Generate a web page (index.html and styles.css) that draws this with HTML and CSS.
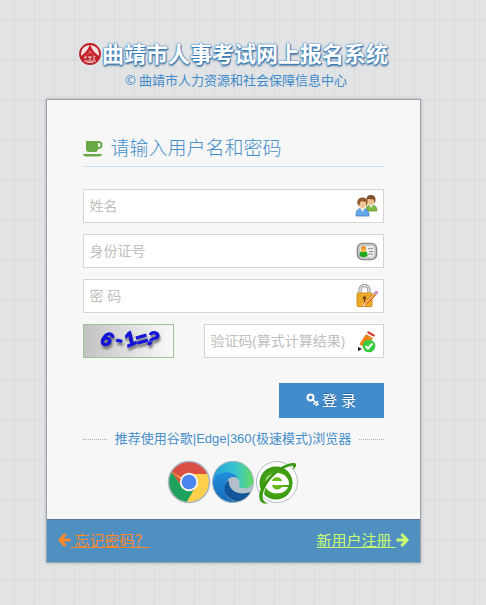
FILE: index.html
```html
<!DOCTYPE html>
<html lang="zh-CN">
<head>
  <meta charset="UTF-8">
  <meta name="viewport" content="width=device-width, initial-scale=1">
  <title>曲靖市人事考试网上报名系统</title>
  <link rel="stylesheet" href="styles.css">
</head>
<body>

  <div class="container">

    <header>
      <h1>
        <svg class="logo" viewBox="0 0 24 24" aria-hidden="true">
          <circle cx="12" cy="13" r="10" fill="#f3e3e3" stroke="#bf1f27" stroke-width="1.8"/>
          <path d="M12 2C11 8 7 12 3 15v2c4-1 7-4 9-7 2 3 5 6 9 7v-2C17 12 13 8 12 2z" fill="#c8232b"/>
          <path d="M12 11L4 18h16z" fill="#c8232b"/>
          <path d="M3 16h18l-2 5H5z" fill="#bf1f27"/>
          <path d="M7 16h2m1 0h4m1 0h2M7 18v-2m5 0v3m3-1h2" stroke="#f3e3e3"/>
          <path d="M6 20h12" stroke="#f3e3e3" stroke-width="1"/>
        </svg>
        <span>曲靖市人事考试网上报名系统</span>
      </h1>
      <p class="company">© 曲靖市人力资源和社会保障信息中心</p>
    </header>

    <main class="login-box">
      <form class="login-main">
        <h2>
          <svg class="coffee" viewBox="0 0 20 16" aria-hidden="true">
            <path fill="#69aa46" fill-rule="evenodd" d="M3 0h12.500a4 4 0 0 1 0 8H15a3 3 0 0 1-3 3H6a3 3 0 0 1-3-3zM15 2v4h.5a2 2 0 0 0 0-4zM0 13h19c0 1.500-1.500 2.500-3 2.500H3C1.500 15.500 0 14.500 0 13z"/>
          </svg>
          请输入用户名和密码
        </h2>

        <div class="field">
          <input type="text" placeholder="姓名" aria-label="姓名">
          <svg class="field-icon" viewBox="0 0 24 24" aria-hidden="true">
            <path d="M11 17c0-5 2-6 5-6s6 1 6 6z" fill="#7fb943" stroke="#60952f" stroke-width=".7"/>
            <path d="M14 11l2 3 2-3z" fill="#f6eee0"/>
            <circle cx="16" cy="6.500" r="4" fill="#eebd8b"/>
            <path d="M11.500 7C11 3 13 1 16 1s5 2 4.500 6l-1.500 2V5.500l-6-.5z" fill="#80502a"/>
            <path d="M1 22c0-6 2-7.500 6-7.500s7 1.500 7 7.500z" fill="#65a8ea" stroke="#3f80c4" stroke-width=".8"/>
            <path d="M5 14l2.500 4 2.500-4z" fill="#f6eee0"/>
            <circle cx="7.500" cy="9.500" r="4.500" fill="#f2c596"/>
            <path d="M2.500 10C1.500 6 4 3.500 7.500 3.500S13.500 6 12.500 10L11 12V8L6 7 4 12z" fill="#905a2e"/>
          </svg>
        </div>

        <div class="field">
          <input type="text" placeholder="身份证号" aria-label="身份证号">
          <svg class="field-icon" viewBox="0 0 24 24" aria-hidden="true">
            <rect x="2.500" y="4.500" width="19" height="16" rx="5" fill="#dcdcdc" stroke="#8b8b8b" stroke-width="1.600"/>
            <rect x="4.500" y="6.500" width="15" height="12" rx="3" fill="#eee" stroke="#bbb" stroke-width=".7"/>
            <path d="M4.500 17c0-4 1-5 4-5s4 1 4 5c-2 1.500-6 1.500-8 0z" fill="#20a91c"/>
            <circle cx="8.500" cy="10.500" r="2.700" fill="#f5b74d"/>
            <path d="M6 10c0-4 5-4 5 0-2-1-3-1-5 0z" fill="#e58a20"/>
            <path d="M13 10q2-1.500 5 0M14 12.500h4M13 15.500q2-1.500 5 0" fill="none" stroke="#888"/>
          </svg>
        </div>

        <div class="field">
          <input type="password" placeholder="密 码" aria-label="密码">
          <svg class="field-icon" viewBox="0 0 24 24" aria-hidden="true">
            <path d="M5 11V6.500a4.500 5 0 0 1 9 0V11" fill="none" stroke="#9da1a0" stroke-width="3.500"/>
            <path d="M5 11V6.500a4.500 5 0 0 1 9 0V11" fill="none" stroke="#dfe3e2" stroke-width="1.500"/>
            <rect x="2" y="9" width="15" height="13.500" rx="1" fill="#f3b02b" stroke="#cf8b1c"/>
            <path d="M3 12h13M3 15h13M3 18h13" stroke="#dc951c"/>
            <circle cx="9.500" cy="14" r="1.700" fill="#704214"/>
            <path d="M9 14h1v4H9z" fill="#704214"/>
            <path d="M7 23l2-4L19 9l2 2-10 10z" fill="#f58b32" stroke="#b35d24" stroke-width=".6"/>
            <path d="M9 20L20 9" stroke="#ffe0a8"/>
            <path d="M7 23l2-4 2 2z" fill="#f7dfb2"/>
            <path d="M18.500 9l1.500-1.500 2.500 2.500-1.500 1.500z" fill="#b8b4bd"/>
            <circle cx="21.500" cy="8.500" r="1.700" fill="#d894ca"/>
          </svg>
        </div>

        <div class="captcha-row">
          <svg class="captcha" viewBox="0 0 91 34" role="img" aria-label="6-1=?">
            <defs>
              <linearGradient id="captchaBg">
                <stop offset="0" stop-color="#c2c2c2"/>
                <stop offset="1" stop-color="#fafafa"/>
              </linearGradient>
            </defs>
            <rect x=".5" y=".5" width="90" height="33" fill="url(#captchaBg)" stroke="#9bc694"/>
            <g class="captcha-text">
              <text x="18" y="22" transform="rotate(24 24 16)">6</text>
              <text x="33" y="22" transform="rotate(14 36 16)">-</text>
              <text x="42" y="22" transform="rotate(-24 47 16)">1</text>
              <text x="53" y="22" transform="rotate(-16 58 16)">=</text>
              <text x="63" y="21" transform="rotate(16 69 16)">?</text>
            </g>
          </svg>
          <div class="field">
            <input type="text" placeholder="验证码(算式计算结果)" aria-label="验证码">
            <svg class="field-icon" viewBox="0 0 24 24" aria-hidden="true">
              <path d="M5 14L11 5l7 4-6 10-8 2z" fill="#ef861b"/>
              <path d="M8 15l6-9" stroke="#d9761a" stroke-width="1"/>
              <path d="M12 4l1-2 7 4-1 2z" fill="#e22d2d"/>
              <path d="M11 5l1-1 7 4-1 1z" fill="#fff"/>
              <path d="M3 15l9 4-9 4z" fill="#fff"/>
              <path d="M3 18v4l4-2z" fill="#161616"/>
              <circle cx="14" cy="17" r="6.300" fill="#37cb3d"/>
              <path d="M10.500 17l2.500 2.500 4.500-5" fill="none" stroke="#fff" stroke-width="2"/>
            </svg>
          </div>
        </div>

        <div class="actions">
          <button type="button" class="login-btn">
            <svg class="key" viewBox="0 0 14 14" aria-hidden="true">
              <circle cx="4.500" cy="4.500" r="3" fill="none" stroke="#fff" stroke-width="2"/>
              <path d="M6.500 6.500l6 5.500M9.500 9.500L7.500 11.500M12 8l-2 2M11 11l-1 2" fill="none" stroke="#fff" stroke-width="1.600"/>
            </svg>
            登 录
          </button>
        </div>

        <div class="browser-tip"><span>推荐使用谷歌|Edge|360(极速模式)浏览器</span></div>

        <div class="browsers">
          <a href="#" aria-label="Chrome">
            <svg viewBox="0 0 44 44">
              <circle cx="22" cy="22" r="20.500" fill="#ffd04b"/>
              <path d="M22 22L4.200 11.800A20.500 20.500 0 0 1 40.900 14H22z" fill="#d94f43"/>
              <path d="M4.200 11.800A20.500 20.500 0 0 0 19.500 42.300L29 26l-14 0z" fill="#1fa15c"/>
              <path d="M4.200 11.800L15 26l-1-7z" fill="#d94f43"/>
              <circle cx="22" cy="22" r="9.200" fill="#f4f4f4"/>
              <circle cx="22" cy="22" r="7.300" fill="#4a85ee"/>
              <circle cx="22" cy="22" r="20.500" fill="none" stroke="#a9b5c0" stroke-width="1.500"/>
            </svg>
          </a>
          <a href="#" aria-label="Edge">
            <svg viewBox="0 0 44 44">
              <defs>
                <linearGradient id="edgeTop">
                  <stop offset="0" stop-color="#269fdc"/>
                  <stop offset=".55" stop-color="#36c5cf"/>
                  <stop offset="1" stop-color="#67dc62"/>
                </linearGradient>
                <linearGradient id="edgeLeft" x2="0" y2="1">
                  <stop offset="0" stop-color="#238ddd"/>
                  <stop offset="1" stop-color="#146bb8"/>
                </linearGradient>
              </defs>
              <circle cx="22" cy="22" r="20.500" fill="#b3bfca"/>
              <path d="M1.500 22A20.500 20.500 0 0 1 42.500 21C42 28 34 30 28 27c2-5-1-11-8-11C12 16 5 18 1.500 22z" fill="url(#edgeTop)"/>
              <path d="M1.500 22C5 11 21 9 27 18c-7-3-12 1-13 9-1 9 6 15 14 14.500C14 46 2 36 1.500 22z" fill="url(#edgeLeft)"/>
              <path d="M17 20c-8 9-1 21 11 21.500 5-1 10-5 12-10-10 5-22 0-22-9z" fill="#11569b"/>
              <circle cx="22" cy="22" r="20.500" fill="none" stroke="#a9b5c0"/>
            </svg>
          </a>
          <a href="#" aria-label="360">
            <svg viewBox="0 0 44 44">
              <defs>
                <radialGradient id="green360">
                  <stop offset="0" stop-color="#79c51f"/>
                  <stop offset="1" stop-color="#359710"/>
                </radialGradient>
              </defs>
              <circle cx="22" cy="22" r="20.500" fill="#fff" stroke="#b2bdc8"/>
              <circle cx="21" cy="23" r="16.500" fill="url(#green360)"/>
              <path fill-rule="evenodd" fill="#fff" d="M10 23a12 11 0 0 1 24 2H17c1 5 7 6 10 2h6c-3 9-23 9-23-4zM17 21h10c-1-5-9-5-10 0z"/>
              <path d="M9 36C6 31 13 19 24 10" fill="none" stroke="#fff" stroke-width="2"/>
              <path d="M14 43C2 46 2 33 9 23 17 11 32 2 39 3c4 1 2 4-1 7 1-4 0-5-3-4C25 9 14 18 9 30c-3 8-1 13 5 13z" fill="#39980f"/>
            </svg>
          </a>
        </div>
      </form>

      <nav class="toolbar">
        <a href="#" class="forgot">
          <svg class="arrow" viewBox="0 0 12 14" aria-hidden="true">
            <path d="M7 1L1.500 7 7 13M2 7h10" fill="none" stroke="currentColor" stroke-width="3"/>
          </svg><span>&nbsp;忘记密码？</span>
        </a>
        <a href="#" class="register">
          <span>新用户注册&nbsp;</span><svg class="arrow" viewBox="0 0 12 14" aria-hidden="true">
            <path d="M5 1l5.500 6L5 13M10 7H0" fill="none" stroke="currentColor" stroke-width="3"/>
          </svg>
        </a>
      </nav>
    </main>

  </div>

</body>
</html>
```

FILE: styles.css
```css
* {
  box-sizing: border-box;
}

body {
  margin: 0;
  padding: 37px 20px 40px 0;
  min-height: 100vh;
  font-family: "Open Sans", "Noto Sans CJK SC", sans-serif;
  font-size: 13px;
  color: #393939;
  background-color: #e1e3e5;
  background-image:
    repeating-linear-gradient(90deg, transparent 0 14px, rgba(120, 125, 130, 0.09) 14px 15px, transparent 15px 20px),
    repeating-linear-gradient(transparent 0 20px, rgba(120, 125, 130, 0.07) 20px 21px, transparent 21px 40px);
}

.container {
  max-width: 375px;
  margin: 0 auto;
}

header {
  text-align: center;
}

h1 {
  display: flex;
  justify-content: center;
  align-items: center;
  margin: 0;
  height: 32px;
  font-size: 22px;
  line-height: 32px;
  white-space: nowrap;
  color: #fff;
  text-shadow: 0 0 1px #337ab7, 0 0 2px #337ab7, 1px 1px 1px #337ab7, 0 2px 2px #6f87a0;
}

.logo {
  width: 24px;
  height: 24px;
}

.company {
  margin: 0;
  padding: 1px 0 0 6px;
  line-height: 20px;
  color: #428bca;
}

.login-box {
  margin-top: 9px;
  border: 1px solid #9ca2a9;
  background: #f7f7f7;
  box-shadow: 0 0 3px rgba(0, 0, 0, 0.25);
}

.login-main {
  padding: 33px 36px 15px;
}

h2 {
  display: flex;
  align-items: center;
  gap: 8px;
  margin: 0 0 22px;
  padding-bottom: 2px;
  border-bottom: 1px solid #cce2f1;
  font-size: 19px;
  font-weight: 300;
  line-height: 31px;
  color: #478fca;
}

.coffee {
  width: 20px;
  height: 16px;
}

.field {
  position: relative;
  margin-bottom: 11px;
}

.field input {
  display: block;
  width: 100%;
  height: 34px;
  padding: 0 32px 1px 6px;
  border: 1px solid #d5d5d5;
  border-radius: 0;
  background: #fff;
  font-family: inherit;
  font-size: 14px;
  color: #858585;
}

.field input::placeholder {
  color: #c0c0c0;
}

.field-icon {
  position: absolute;
  top: 5px;
  right: 5px;
  width: 24px;
  height: 24px;
}

.captcha-row {
  display: flex;
  gap: 30px;
}

.captcha-row .field {
  flex: 1;
}

.captcha {
  width: 91px;
  height: 34px;
}

.captcha-text {
  font-family: "Liberation Sans", sans-serif;
  font-size: 20px;
  font-style: italic;
  font-weight: bold;
  fill: #1212d8;
  stroke: #1212d8;
  stroke-width: 1px;
  filter: drop-shadow(1px 3px 1px #777);
}

.actions {
  display: flex;
  justify-content: flex-end;
  margin-top: 14px;
}

.login-btn {
  display: flex;
  align-items: center;
  justify-content: center;
  gap: 2px;
  width: 105px;
  height: 35px;
  padding: 0 0 2px;
  border: 0;
  background: #428bca;
  font-family: inherit;
  font-size: 15px;
  color: #fff;
  text-shadow: 0 -1px 0 rgba(0, 0, 0, 0.25);
  cursor: pointer;
}

.key {
  width: 14px;
  height: 14px;
}

.browser-tip {
  display: flex;
  align-items: center;
  gap: 8px;
  margin-top: 11px;
  font-family: "Liberation Sans", "Noto Sans CJK SC", sans-serif;
  line-height: 20px;
  white-space: nowrap;
  color: #478fca;
}

.browser-tip::before,
.browser-tip::after {
  content: "";
  flex: 1;
  border-top: 1px dotted #a6b4c0;
}

.browsers {
  display: flex;
  justify-content: center;
  margin-top: 11px;
}

.browsers a,
.browsers svg {
  display: block;
  width: 44px;
  height: 44px;
}

.toolbar {
  display: flex;
  align-items: center;
  justify-content: space-between;
  height: 43px;
  padding: 0 11px 2px;
  border-top: 1px solid #597597;
  background: #5090c1;
}

.toolbar a {
  display: flex;
  align-items: center;
  font-size: 15px;
  line-height: 20px;
  text-decoration: none;
}

.toolbar span {
  text-decoration: underline;
}

.arrow {
  width: 13px;
  height: 14px;
}

.forgot {
  color: #fe892a;
}

.register {
  color: #cbff72;
}
```
